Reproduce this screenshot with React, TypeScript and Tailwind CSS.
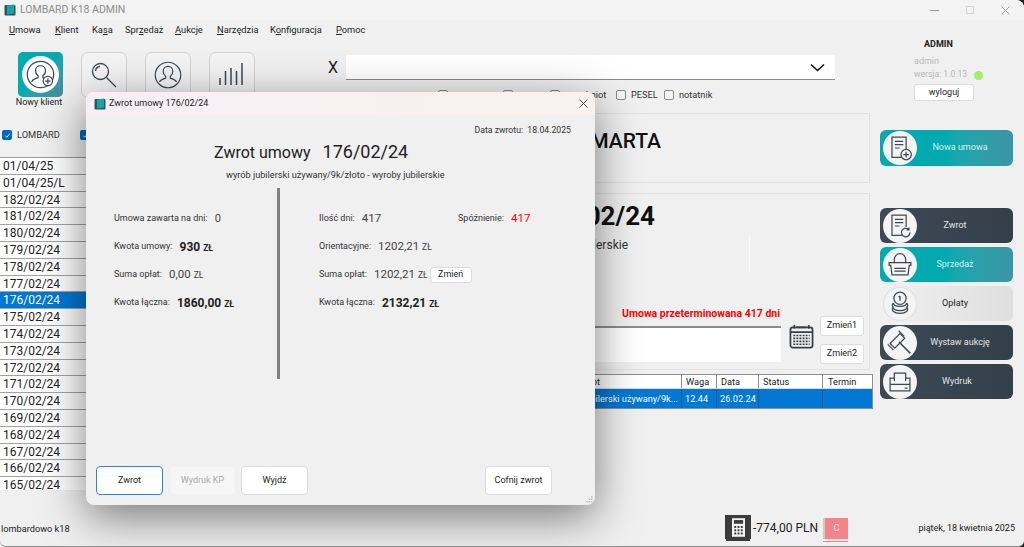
import React from 'react';

const ink = '#3b4954';

const AppLogo = () => (
  <svg width="12" height="12" viewBox="0 0 12 12">
    <rect x="0.5" y="1" width="11" height="10.5" rx="1" fill="#2f5560" />
    <path d="M3 1.5 L10 0.5 V9.5 L3 10.5 Z" fill="#19a5a8" />
  </svg>
);

const PersonIcon = ({ plus }: { plus?: boolean }) => (
  <svg viewBox="0 0 40 40" className="w-full h-full" fill="none" stroke={ink} strokeWidth="1.6">
    <circle cx="20" cy="20" r="17" />
    <path d="M20 8.5c-4 0-6.4 3-6.4 6.6 0 3 1.5 5.4 3.3 6.6v2.4c-3.6 1-6.8 2.6-8.4 5" />
    <path d="M20 8.5c4 0 6.4 3 6.4 6.6 0 3-1.5 5.4-3.3 6.6v2.4c3.6 1 6.8 2.6 8.4 5" />
    {plus && (
      <>
        <circle cx="29.5" cy="28.5" r="6" fill="#fff" />
        <path d="M29.5 25v7M26 28.5h7" />
      </>
    )}
  </svg>
);

const ToolTile = ({ children }: { children: React.ReactNode }) => (
  <div className="w-[46px] h-[46px] rounded-[7px] border border-[#d3d3d3] bg-[#f3f3f3] flex items-center justify-center">
    {children}
  </div>
);

const Check = ({ label, width }: { label?: string; width: string }) => (
  <div className={`flex items-center gap-[5px] shrink-0 ${width}`}>
    <span className="w-[10px] h-[10px] rounded-[2px] border border-[#8a8a8a] bg-[#f6f6f6] shrink-0" />
    <span className="text-[9.2px] text-[#333]">{label}</span>
  </div>
);

const BlueCheck = () => (
  <span className="w-[10px] h-[10px] rounded-[2px] bg-[#0067c0] flex items-center justify-center shrink-0">
    <svg width="7" height="7" viewBox="0 0 8 8" fill="none" stroke="#fff" strokeWidth="1">
      <path d="M1.5 4.2 3.2 6 6.6 2" />
    </svg>
  </span>
);

const DocLines = ({ children }: { children?: React.ReactNode }) => (
  <svg viewBox="0 0 36 36" className="w-[34px] h-[34px] shrink-0" fill="none" stroke={ink} strokeWidth="1.3">
    <circle cx="18" cy="18" r="18" fill="#f4f4f4" stroke="none" />
    <path d="M20 28H9.5V6.5h15V19" />
    <path d="M12.5 11h9M12.5 14.5h9M12.5 18h5" />
    {children}
  </svg>
);

const sideIcons: Record<string, React.ReactNode> = {
  nowa: (
    <DocLines>
      <circle cx="24.5" cy="25" r="5.5" fill="#f4f4f4" />
      <path d="M24.5 22v6M21.5 25h6" />
    </DocLines>
  ),
  zwrot: (
    <DocLines>
      <path d="M28.5 25a4.5 4.5 0 1 1-1.5-3.4M27.5 19.5v2.5H25" fill="#f4f4f4" />
    </DocLines>
  ),
  sprzedaz: (
    <svg viewBox="0 0 36 36" className="w-[34px] h-[34px] shrink-0" fill="none" stroke={ink} strokeWidth="1.3">
      <circle cx="18" cy="18" r="18" fill="#f4f4f4" stroke="none" />
      <path d="M12 15v-3a6 6 0 0 1 12 0v3" />
      <path d="M6.5 15.5h23v3h-1.7l-1.3 10h-17l-1.3-10H6.5z" />
      <path d="M12 21.5h12M12 24.5h12" />
    </svg>
  ),
  oplaty: (
    <svg viewBox="0 0 36 36" className="w-[34px] h-[34px] shrink-0" fill="none" stroke={ink} strokeWidth="1.3">
      <circle cx="18" cy="18" r="17.5" fill="#f4f4f4" stroke="#e2e2e2" />
      <circle cx="18" cy="12" r="6.5" />
      <path d="M18 9.5v5M16.6 10.6 18 9.5" />
      <path d="M11 17c0 2 3 3.5 7 3.5s7-1.5 7-3.5M11 17c-1.5 1.2-1.5 3.5 0 4.5M25 17c1.5 1.2 1.5 3.5 0 4.5" />
      <path d="M11 21.5c0 2 3 3.5 7 3.5s7-1.5 7-3.5M11 21.5c-1.5 1.2-1.5 3.5 0 4.5 1.5 1.3 4 2 7 2s5.5-.7 7-2c1.5-1 1.5-3.3 0-4.5" />
    </svg>
  ),
  aukcja: (
    <svg viewBox="0 0 36 36" className="w-[34px] h-[34px] shrink-0" fill="none" stroke={ink} strokeWidth="1.3">
      <circle cx="18" cy="18" r="18" fill="#f4f4f4" stroke="none" />
      <path d="m7.5 18.5 5 5 10.5-10.5-5-5z" />
      <path d="m5 19.5 6 6M16.5 5l6 6" />
      <path d="m17 17 12 12" strokeWidth="1.6" />
    </svg>
  ),
  wydruk: (
    <svg viewBox="0 0 36 36" className="w-[34px] h-[34px] shrink-0" fill="none" stroke={ink} strokeWidth="1.3">
      <circle cx="18" cy="18" r="18" fill="#f4f4f4" stroke="none" />
      <path d="M12 17V8.5h12V17" />
      <path d="M12 14H7.5v13.5h21V14H24" />
      <path d="M7.5 20.5H28.5" />
      <path d="M23 24.5h3" />
    </svg>
  ),
};

const SideButton = ({
  icon,
  label,
  tone,
  labelPad,
  className = '',
}: {
  icon: string;
  label: string;
  tone: 'teal' | 'dark' | 'light';
  labelPad: string;
  className?: string;
}) => {
  const toneClass =
    tone === 'teal'
      ? 'bg-gradient-to-r from-[#02aab0] via-[#02aab0] to-[#3a95a3] text-[#d8f2f2]'
      : tone === 'dark'
        ? 'bg-gradient-to-r from-[#3d4a55] to-[#333f49] text-[#e2e6e8]'
        : 'bg-gradient-to-r from-[#f0f0f0] to-[#dfdfdf] text-[#222]';
  return (
    <div className={`w-[133px] h-[35px] rounded-[6px] flex items-center pl-[3px] ${toneClass} ${className}`}>
      {sideIcons[icon]}
      <span className={`flex-1 text-center text-[9px] ${labelPad}`}>{label}</span>
    </div>
  );
};

const listRows = [
  '01/04/25', '01/04/25/L', '182/02/24', '181/02/24', '180/02/24', '179/02/24', '178/02/24',
  '177/02/24', '176/02/24', '175/02/24', '174/02/24', '173/02/24', '172/02/24', '171/02/24',
  '170/02/24', '169/02/24', '168/02/24', '167/02/24', '166/02/24', '165/02/24',
];

const Zl = () => <span className="text-[8.5px] ml-[3px]">ZŁ</span>;

const DialogRow = ({ label, children }: { label: string; children: React.ReactNode }) => (
  <div className="h-[28px] flex items-center gap-[7px] whitespace-nowrap">
    <span className="text-[9px] text-[#333]">{label}</span>
    {children}
  </div>
);

const DialogButton = ({
  children,
  className = '',
}: {
  children: React.ReactNode;
  className?: string;
}) => (
  <button className={`h-[29px] rounded-[4px] border text-[9px] ${className}`}>{children}</button>
);

export default function App() {
  return (
    <div className="w-[1024px] h-[547px] bg-gradient-to-r from-[#f0f0f0] from-90% to-[#222] to-95%">
      <div
        className="relative w-[1024px] h-[547px] overflow-hidden bg-[#f0f0f0] flex flex-col text-[#222] border-b border-[#8f8f8f] rounded-b-[6px] rounded-tr-[8px]"
        style={{ fontFamily: 'Roboto, "Noto Sans", sans-serif' }}
      >
        {/* title bar */}
        <div className="h-[20px] shrink-0 flex items-center pl-[4px] bg-[#f3f3f3]">
          <AppLogo />
          <span className="ml-[4px] text-[10.5px] text-[#8c8c8c]">LOMBARD K18 ADMIN</span>
          <div className="ml-auto flex items-center gap-[27px] pr-[14px]">
            <span className="w-[9px] h-px bg-[#9a9a9a]" />
            <span className="w-[8px] h-[8px] border border-[#d5d5d5]" />
            <svg width="9" height="9" viewBox="0 0 9 9" stroke="#9a9a9a" strokeWidth="0.9">
              <path d="M0.5 0.5 8.5 8.5M8.5 0.5 0.5 8.5" />
            </svg>
          </div>
        </div>

        {/* menu */}
        <div className="h-[20px] shrink-0 flex items-center pl-[9px] text-[9.3px] text-[#222] whitespace-nowrap">
          <span className="w-[46px]"><u>U</u>mowa</span>
          <span className="w-[37px]"><u>K</u>lient</span>
          <span className="w-[33px]">Ka<u>s</u>a</span>
          <span className="w-[50px]">Spr<u>z</u>edaż</span>
          <span className="w-[42px]"><u>A</u>ukcje</span>
          <span className="w-[53px]"><u>N</u>arzędzia</span>
          <span className="w-[66px]">K<u>o</u>nfiguracja</span>
          <span><u>P</u>omoc</span>
        </div>

        {/* toolbar row */}
        <div className="h-[73px] shrink-0 flex">
          <div className="w-[323px] shrink-0 pt-[12px] pl-[18px] flex gap-[18px]">
            <div className="w-[45px] flex flex-col items-center">
              <div className="w-[45px] h-[45px] rounded-[5px] bg-gradient-to-br from-[#02aab0] via-[#02aab0] to-[#4a8a9c] flex items-center justify-center">
                <div className="w-[37px] h-[37px] rounded-full bg-white p-[3px]">
                  <PersonIcon plus />
                </div>
              </div>
              <span className="mr-[3px] text-[9px] leading-[11px] whitespace-nowrap text-[#222]">Nowy klient</span>
            </div>
            <ToolTile>
              <svg width="30" height="30" viewBox="0 0 30 30" fill="none" stroke={ink} strokeWidth="1.3">
                <circle cx="11.5" cy="11.5" r="8" />
                <path d="M6.5 11a5 5 0 0 1 4.5-4.5M17.5 17.5 27 27" />
              </svg>
            </ToolTile>
            <ToolTile>
              <div className="w-[30px] h-[30px]"><PersonIcon /></div>
            </ToolTile>
            <ToolTile>
              <svg width="30" height="30" viewBox="0 0 30 30" fill="none" stroke={ink} strokeWidth="1.5">
                <path d="M3 25v-7M8.5 25V11M14 25V8M19.5 25V11M25 25V3" />
              </svg>
            </ToolTile>
          </div>
          <div className="w-[512px] shrink-0 pt-[15px]">
            <div className="flex items-center h-[25px]">
              <span className="w-[23px] pl-[5px] text-[16px] text-[#222]">X</span>
              <div className="w-[489px] h-[25px] bg-white border-b border-[#8a8a8a] flex items-center justify-end pr-[10px]">
                <svg width="15" height="9" viewBox="0 0 15 9" fill="none" stroke="#111" strokeWidth="1.6">
                  <path d="M1 1.5 7.5 7.5 14 1.5" />
                </svg>
              </div>
            </div>
            <div className="mt-[8px] flex items-center pl-[115px]">
              <Check width="w-[65px]" />
              <Check width="w-[47px]" />
              <Check width="w-[66px]" label="przedmiot" />
              <Check width="w-[48px]" label="PESEL" />
              <Check width="w-[60px]" label="notatnik" />
            </div>
          </div>
          <div className="flex-1 pl-[79px] flex flex-col text-[9px]">
            <span className="pl-[10px] h-[9px] leading-[9px] font-bold text-[#222]">ADMIN</span>
            <span className="mt-[6px] leading-[12px] text-[#b8b8b8]">admin</span>
            <div className="mt-[1px] flex items-center">
              <span className="leading-[12px] text-[8.6px] text-[#b8b8b8] whitespace-nowrap">wersja: 1.0.13</span>
              <span className="ml-[7px] mt-[2px] w-[9px] h-[9px] rounded-full bg-[#a8ec6c]" />
            </div>
            <div className="mt-[4px] w-[60px] h-[17px] rounded-[3px] border border-[#dcdcdc] bg-white flex items-center justify-center text-[#222]">
              wyloguj
            </div>
          </div>
        </div>

        {/* body */}
        <div className="flex-1 flex min-h-0">
          <div className="w-[150px] shrink-0 pt-[16px]">
            <div className="h-[12px] flex items-center pl-[2px] gap-[5px] text-[9.3px] text-[#333]">
              <BlueCheck />
              <span className="w-[58px]">LOMBARD</span>
              <BlueCheck />
            </div>
            <div className="mt-[16px] bg-white h-[333px] overflow-hidden border-t border-[#9a9a9a]">
              {listRows.map((row, i) => (
                <div
                  key={row}
                  className={`h-[16.8px] leading-[17px] pl-[3px] text-[12px] border-b border-[#a2a2a2] ${
                    i === 8 ? 'bg-[#0078d4] text-white' : 'text-[#222]'
                  }`}
                >
                  {row}
                </div>
              ))}
            </div>
          </div>

          <div className="w-[723px] shrink-0">
            <div className="mr-[3px] h-[70px] border border-[#e2e2e2] flex items-start justify-end pr-[208px] pt-[13px]">
              <span className="text-[21px] leading-[28px] font-medium text-[#111]">MARTA</span>
            </div>
            <div className="mr-[3px] mt-[10px] h-[177px] border border-[#e2e2e2] flex flex-col">
              <div className="h-[42px] pt-[5px] pr-[214px] text-right text-[26px] leading-[34px] font-bold text-[#111]">
                02/24
              </div>
              <div className="h-[37px] flex justify-end">
                <span className="text-[12px] leading-[18px] mr-[121px] text-[#333]">wyroby jubilerskie</span>
                <span className="w-px h-[36px] bg-[#fafafa] mr-[119px]" />
              </div>
              <div className="mt-[34px] pr-[89px] text-right text-[10.5px] leading-[14px] font-bold text-[#ff0000]">
                Umowa przeterminowana 417 dni
              </div>
              <div className="flex-1 flex justify-end items-start pr-[5px]">
                <div className="w-[300px] h-[36px] mt-[5px] bg-white border-t-2 border-[#8c8c8c]" />
                <div className="ml-[8px] mr-[6px] mt-[3px]">
                  <svg width="25" height="25" viewBox="0 0 26 26" fill="none" stroke="#3a3f44" strokeWidth="1.8">
                    <rect x="1.5" y="3.5" width="23" height="21" rx="2.5" />
                    <path d="M1.5 8.5h23M5.5 1v4M20.5 1v4M8 3.5h10" />
                    <path d="M4.5 12h17M4.5 15h17M4.5 18h17M4.5 21h17" strokeDasharray="2 1.2" strokeWidth="1.7" />
                  </svg>
                </div>
                <div className="flex flex-col gap-[8px] -mt-[5px]">
                  <div className="w-[44px] h-[20px] rounded-[3px] border border-[#dcdcdc] bg-white text-[9px] flex items-center justify-center">Zmień1</div>
                  <div className="w-[44px] h-[20px] rounded-[3px] border border-[#dcdcdc] bg-white text-[9px] flex items-center justify-center">Zmień2</div>
                </div>
              </div>
            </div>
            <div className="mt-[4px] h-[35px] border border-[#8e8e8e] text-[9.2px]">
              <div className="h-[14px] bg-white flex text-[#222] border-b border-[#d8d8d8] leading-[14px]">
                <span className="flex-1 text-right pr-[81px]">Przedmiot</span>
                <span className="w-[35px] border-l border-[#8e8e8e] pl-[4px]">Waga</span>
                <span className="w-[42px] border-l border-[#8e8e8e] pl-[4px]">Data</span>
                <span className="w-[64px] border-l border-[#8e8e8e] pl-[4px]">Status</span>
                <span className="w-[50px] border-l border-[#8e8e8e] pl-[5px]">Termin</span>
              </div>
              <div className="h-[19px] bg-[#0078d4] flex text-white leading-[19px]">
                <span className="flex-1 text-right pr-[3px] whitespace-nowrap">wyrób jubilerski używany/9k...</span>
                <span className="w-[35px] border-l border-[#0a5a9c] pl-[3px]">12.44</span>
                <span className="w-[42px] border-l border-[#0a5a9c] pl-[3px]">26.02.24</span>
                <span className="w-[64px] border-l border-[#0a5a9c]" />
                <span className="w-[50px] border-l border-[#0a5a9c]" />
              </div>
            </div>
          </div>

          <div className="ml-[7px] pt-[17px] flex flex-col">
            <SideButton icon="nowa" label="Nowa umowa" tone="teal" labelPad="pr-[10px]" className="h-[36px]" />
            <div className="mt-[42px] flex flex-col gap-[4px]">
              <SideButton icon="zwrot" label="Zwrot" tone="dark" labelPad="pr-[20px]" />
              <SideButton icon="sprzedaz" label="Sprzedaż" tone="teal" labelPad="pr-[20px]" />
              <SideButton icon="oplaty" label="Opłaty" tone="light" labelPad="pr-[20px]" />
              <SideButton icon="aukcja" label="Wystaw aukcję" tone="dark" labelPad="pr-[10px]" />
              <SideButton icon="wydruk" label="Wydruk" tone="dark" labelPad="pr-[16px]" />
            </div>
          </div>
        </div>

        {/* status bar */}
        <div className="h-[36px] shrink-0 flex items-start text-[#222]">
          <span className="w-[711px] pl-[1px] pt-[12px] text-[9.2px]">lombardowo k18</span>
          <div className="ml-[14px] mt-[5px] flex flex-col items-center">
            <div className="w-[26px] h-[24px] bg-[#3c3c3c] flex items-center justify-center">
              <svg width="13" height="19" viewBox="0 0 14 20">
                <rect width="14" height="20" fill="#f4f4f4" />
                <rect x="2" y="2" width="10" height="4" fill="#3c3c3c" />
                <path d="M2.5 8.5h2v2h-2zM6 8.5h2v2H6zM9.5 8.5h2v2h-2zM2.5 12h2v2h-2zM6 12h2v2H6zM9.5 12h2v2h-2zM2.5 15.5h2v2h-2zM6 15.5h2v2H6zM9.5 15.5h2v2h-2z" fill="#3c3c3c" />
              </svg>
            </div>
            <span className="w-[24px] h-[2px] bg-[#3c3c3c]" />
          </div>
          <span className="ml-[2px] pt-[10px] text-[12px] leading-[16px] whitespace-nowrap w-[70px]">-774,00 PLN</span>
          <div className="mt-[8px] flex flex-col">
            <div className="w-[25px] h-[21px] bg-[#f28488] border-l-2 border-[#c9c9c9] text-[#fbe0e0] text-[9px] flex items-center justify-center">C</div>
            <span className="mt-[2px] w-[25px] h-px bg-[#f28488]" />
          </div>
          <span className="ml-auto pr-[9px] pt-[12px] text-[9px]">piątek, 18 kwietnia 2025</span>
        </div>

        {/* dialog */}
        <div className="absolute left-[86px] top-[92px] w-[509px] h-[413px] rounded-[8px] bg-[#f0f0f0] shadow-[0_12px_45px_rgba(0,0,0,0.5)] flex flex-col overflow-hidden">
          <div className="h-[23px] shrink-0 flex items-center pl-[8px] pr-[7px] bg-gradient-to-r from-[#f8eff6] to-[#f8f1ec]">
            <AppLogo />
            <span className="ml-[3px] text-[9px] text-[#222]">Zwrot umowy 176/02/24</span>
            <svg className="ml-auto" width="9" height="9" viewBox="0 0 9 9" stroke="#333" strokeWidth="0.9">
              <path d="M0.5 0.5 8.5 8.5M8.5 0.5 0.5 8.5" />
            </svg>
          </div>
          <div className="mt-[9px] pr-[24px] text-right text-[8.7px] leading-[12px] text-[#333]">
            Data zwrotu:&nbsp;&nbsp;18.04.2025
          </div>
          <div className="mt-[3px] h-[26px] ml-[128px] flex items-baseline gap-[12px] leading-[26px] text-[#222] whitespace-nowrap">
            <span className="text-[16px]">Zwrot umowy</span>
            <span className="text-[18px]">176/02/24</span>
          </div>
          <div className="mt-[3px] ml-[140px] text-[9.2px] leading-[14px] text-[#333] whitespace-nowrap">
            wyrób jubilerski używany/9k/złoto - wyroby jubilerskie
          </div>
          <div className="mt-[6px] h-[191px] flex">
            <div className="w-[191px] pl-[28px] pt-[17px]">
              <DialogRow label="Umowa zawarta na dni:"><span className="text-[11px] text-[#444]">0</span></DialogRow>
              <DialogRow label="Kwota umowy:"><span className="text-[12px] font-bold">930<Zl /></span></DialogRow>
              <DialogRow label="Suma opłat:"><span className="text-[11.5px] text-[#444]">0,00<Zl /></span></DialogRow>
              <DialogRow label="Kwota łączna:"><span className="text-[12px] font-bold">1860,00<Zl /></span></DialogRow>
            </div>
            <div className="w-[3px] bg-[#808080]" />
            <div className="flex-1 pl-[39px] pt-[17px]">
              <div className="flex">
                <div className="w-[139px]">
                  <DialogRow label="Ilość dni:"><span className="text-[11.5px] text-[#444]">417</span></DialogRow>
                </div>
                <DialogRow label="Spóźnienie:"><span className="text-[11.5px] text-[#ff0000]">417</span></DialogRow>
              </div>
              <DialogRow label="Orientacyjne:"><span className="text-[11.5px] text-[#444]">1202,21<Zl /></span></DialogRow>
              <DialogRow label="Suma opłat:">
                <span className="text-[11.5px] text-[#444]">1202,21<Zl /></span>
                <span className="w-[42px] h-[16px] -ml-[5px] rounded-[3px] border border-[#dcdcdc] bg-white flex items-center justify-center text-[9px]">Zmień</span>
              </DialogRow>
              <DialogRow label="Kwota łączna:"><span className="text-[12px] font-bold">2132,21<Zl /></span></DialogRow>
            </div>
          </div>
          <div className="mt-[87px] flex pl-[10px]">
            <DialogButton className="w-[67px] bg-white border-[#2f86d6]">Zwrot</DialogButton>
            <DialogButton className="w-[65px] ml-[7px] bg-[#f6f6f6] border-[#f2f2f2] text-[#a9a9a9]">Wydruk KP</DialogButton>
            <DialogButton className="w-[67px] ml-[6px] bg-white border-[#dcdcdc]">Wyjdź</DialogButton>
            <DialogButton className="w-[67px] ml-[177px] bg-white border-[#dcdcdc]">Cofnij zwrot</DialogButton>
          </div>
          {/* resize grip */}
          <svg className="absolute right-[2px] bottom-[2px]" width="7" height="7" viewBox="0 0 7 7" fill="#bdbdbd">
            <path d="M5 0h1.5v1.5H5zM2.5 2.5H4V4H2.5zM5 2.5h1.5V4H5zM0 5h1.5v1.5H0zM2.5 5H4v1.5H2.5zM5 5h1.5v1.5H5z" />
          </svg>
        </div>
      </div>
    </div>
  );
}
